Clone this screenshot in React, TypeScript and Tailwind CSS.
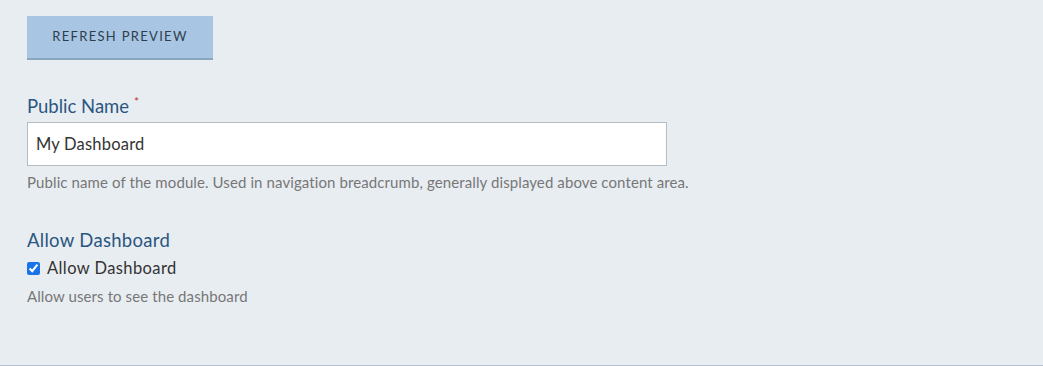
import React from 'react';

export default function App() {
  return (
    <div className="min-h-[366px] w-full bg-[#e8edf2] border-b border-[#b9c2cc] font-['Lato',sans-serif]">
      <div className="px-[27px] pt-4 pb-[58px]">
        <button className="h-11 w-[186px] bg-[#a8c6e3] border-b-2 border-[#8da6bf] text-[13px] tracking-[0.1em] text-[#2f3d4c] uppercase">
          Refresh Preview
        </button>

        {/* Public name field */}
        <div className="mt-[34px]">
          <label className="flex items-start gap-[5px] text-[18.5px] leading-6 text-[#2b5680]">
            Public Name
            <span className="text-[12px] leading-4 text-[#c0392b]">*</span>
          </label>
          <input
            type="text"
            defaultValue="My Dashboard"
            className="mt-1 block h-11 w-[640px] bg-white border border-[#b3bbc3] px-2 text-[16.5px] tracking-[0.2px] text-[#333] outline-none"
          />
          <p className="mt-[6px] text-[15px] leading-5 tracking-[0.1px] text-[#777]">
            Public name of the module. Used in navigation breadcrumb, generally displayed above content area.
          </p>
        </div>

        {/* Allow dashboard */}
        <div className="mt-[36px]">
          <div className="text-[18.5px] leading-6 tracking-[0.3px] text-[#2b5680]">Allow Dashboard</div>
          <label className="mt-1 flex items-center gap-[7px] text-[16.5px] leading-6 tracking-[0.4px] text-[#333]">
            <input type="checkbox" defaultChecked className="m-0 h-[13px] w-[13px] accent-[#1a73e8]" />
            Allow Dashboard
          </label>
          <p className="mt-[6px] text-[15px] leading-5 tracking-[0.1px] text-[#777]">Allow users to see the dashboard</p>
        </div>
      </div>
    </div>
  );
}
